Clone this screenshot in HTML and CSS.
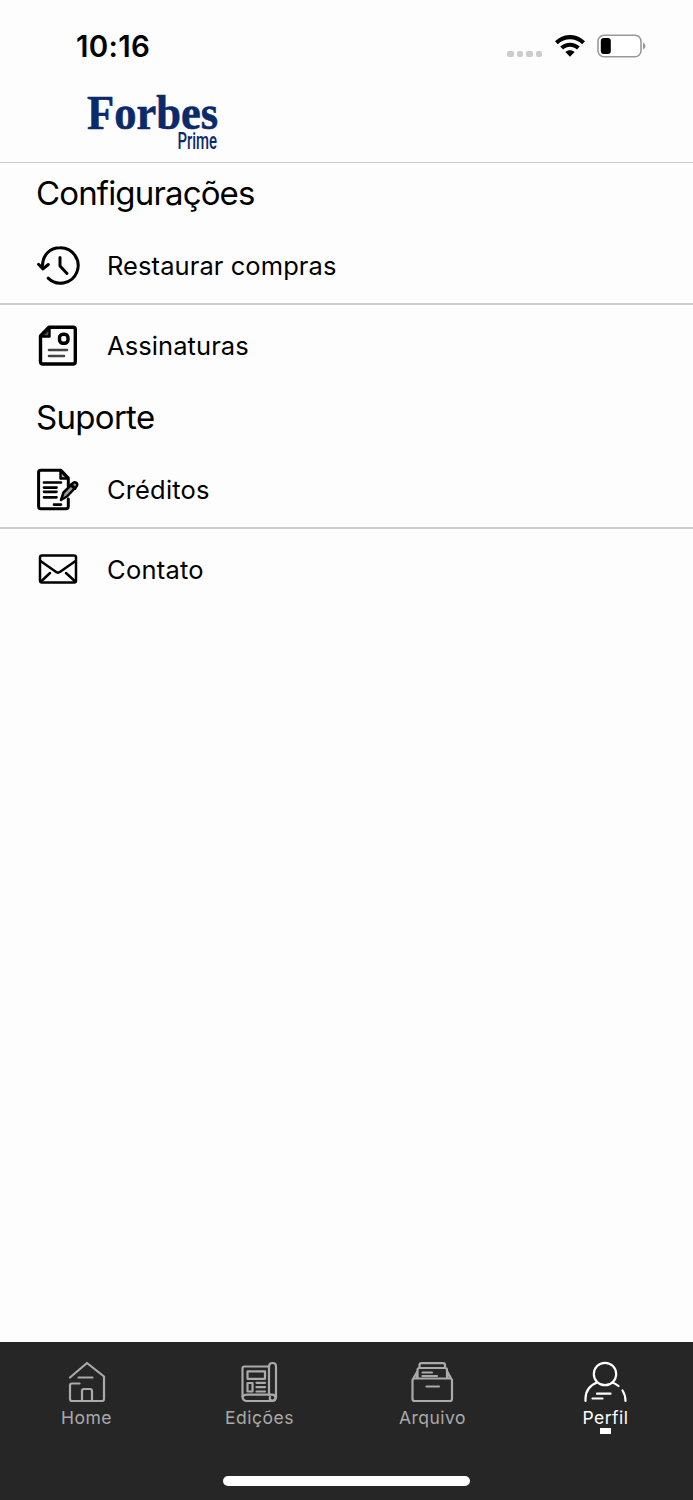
FILE: index.html
```
<!DOCTYPE html>
<html lang="pt-BR">
<head>
    <meta charset="UTF-8">
    <title>Forbes Prime</title>
    <link rel="stylesheet" href="styles.css">
</head>
<body>
<div class="app">
    <div class="status">
        <span class="time">10:16</span>
        <div class="signals">
            <ul class="dots"><li></li><li></li><li></li><li></li></ul>
            <svg class="wifi" width="30" height="22" viewBox="0 0 30 22">
                <path d="M0 6.2C8.5-2.1 21.5-2.1 30 6.2L27.2 9.2C20.3 2.6 9.7 2.6 2.8 9.2Z"/>
                <path d="M5.200 11.600C10.7 6.3 19.3 6.3 24.8 11.6L21.9 14.5C18 10.9 12 10.9 8.1 14.5Z"/>
                <path d="M10.4 17C13 14.7 17 14.7 19.6 17L15 21.8Z"/>
            </svg>
            <svg class="battery" width="49" height="24" viewBox="0 0 49 24">
                <rect x="1" y="1.2" width="43" height="21.6" rx="6" fill="#fff" stroke="#999" stroke-width="1.6"/>
                <rect x="3.8" y="4" width="10" height="16" rx="3" fill="#000"/>
                <path d="M46 8.5Q48.5 9.5 48.5 12T46 15.5Z" fill="#999"/>
            </svg>
        </div>
    </div>
    <div class="header">
        <svg class="logo" width="150" height="69" viewBox="0 0 150 69">
            <text class="forbes" x="1" y="37" textLength="131" lengthAdjust="spacingAndGlyphs">Forbes</text>
            <text class="prime" x="91.5" y="57" textLength="39.500" lengthAdjust="spacingAndGlyphs">Prime</text>
        </svg>
    </div>
    <div class="content">
        <h2 class="config">Configurações</h2>
        <ul class="list">
            <li>
                <svg class="icon" width="44" height="44" viewBox="0 0 44 44" stroke-width="3">
                    <path d="M6.500 22C6.500 11 14 3.800 24 3.800A17.700 17.700 0 1 1 12.100 34.200"/>
                    <path d="M2.500 20.300L7 24.900L12.300 20.500M24 13.500V22L31 29.500"/>
                </svg>
                <span>Restaurar compras</span>
            </li>
            <li>
                <svg class="icon" width="44" height="44" viewBox="0 0 44 44" stroke-width="3.4">
                    <path d="M13 3.300H37Q39.300 3.300 39.300 5.600V37.800Q39.300 40 37 40H6.700Q4.500 40 4.500 37.800V12Z"/>
                    <path d="M13.500 4V12.500H5Z" fill="#555" stroke-width="2.400"/>
                    <rect x="23.500" y="10.300" width="8.500" height="9" rx="3.500" stroke-width="3.400"/>
                    <path d="M13 26H31M13 32H28" stroke="#444" stroke-width="2.600"/>
                </svg>
                <span>Assinaturas</span>
            </li>
        </ul>
        <h2 class="support">Suporte</h2>
        <ul class="list">
            <li>
                <svg class="icon" width="44" height="44" viewBox="0 0 44 44" stroke-width="3">
                    <path d="M32.300 31V38.500Q32.300 40.700 30 40.700H4.800Q2.600 40.700 2.600 38.500V4.500Q2.600 2.300 4.800 2.300H25L32.300 10V18"/>
                    <path d="M24.500 3V10.500H32Z" fill="#aaa" stroke-width="2.400"/>
                    <path d="M8 14.500H25M8 19.600H20.500M8 23.800H20.500M8 29.300H20.500M18 36.600H25" stroke-width="2.700"/>
                    <path d="M27.500 24.500L37 15Q39 13.500 40.500 15Q42 16.500 40.500 18.500L31 28.500L25 32Z" fill="#999" stroke-width="2.500"/>
                    <path d="M35 17L39 20.500"/>
                </svg>
                <span class="credits">Créditos</span>
            </li>
            <li>
                <svg class="icon" width="44" height="44" viewBox="0 0 44 44" stroke-width="2.500">
                    <rect x="4" y="7.500" width="36" height="27" rx="2"/>
                    <path d="M4.500 13L19.800 23.800Q22 25.500 24.200 23.800L39.500 13M5 33.500L14 25M39.300 33.500L30 25"/>
                </svg>
                <span class="contact">Contato</span>
            </li>
        </ul>
    </div>
    <div class="tabs">
        <a class="tab">
            <svg width="44" height="44" viewBox="0 0 44 44">
                <path d="M6 17.5L23 3L40 16.5V39Q40 41 38 41H8Q6 41 6 39V25.5Q6 23.5 8 23.5H15.5M14.5 17.5H28.500M18 40.500V31Q18 29 20 29H26Q28 29 28 31V40.500"/>
            </svg>
            <span>Home</span>
        </a>
        <a class="tab">
            <svg width="44" height="44" viewBox="0 0 44 44">
                <path d="M32 6.500H7.500Q5.500 6.500 5.500 8.500V36Q5.500 41 10 41H35Q39 41 39 37V6Q39 3 35.500 3T32 6.500V35"/>
                <path d="M5.500 36.500Q7 34.700 10 34.700H35Q38.300 34.700 38.300 37.700T35 40.500Q32 40 33 37"/>
                <rect x="10.500" y="11.300" width="17.500" height="7.500"/>
                <rect x="10.500" y="23" width="5" height="8.500"/>
                <path d="M19.500 22.800H28M19.500 27.200H28M19.500 31.500H28"/>
            </svg>
            <span>Edições</span>
        </a>
        <a class="tab">
            <svg width="44" height="44" viewBox="0 0 44 44">
                <path d="M4.500 18.500H40Q42 18.500 42 20.500V39Q42 41 40 41H4.500Q2.500 41 2.500 39V20.500Q2.500 18.500 4.500 18.500ZM2.800 19.500L7 12V18M41.700 19.500L37.500 12V18"/>
                <path d="M7.500 18V10Q7.500 8 9.500 8H35Q37 8 37 10V18M9.500 8V5Q9.500 3.200 11.500 3.200H33Q35 3.200 35 5V8"/>
                <path d="M12.500 12.500H22M12.500 16H27M16.500 26.500H29"/>
            </svg>
            <span>Arquivo</span>
        </a>
        <a class="tab active">
            <svg width="44" height="44" viewBox="0 0 44 44">
                <circle cx="22" cy="14" r="11.2"/>
                <path d="M2.500 41V39Q2.500 27 14 22.500M29 22.500Q32.500 23.500 35.500 26M39.500 30.500Q42.500 35 42.500 41M14 33.700H27.500M9.500 38.500H19.500"/>
            </svg>
            <span>Perfil</span>
            <i class="mark"></i>
        </a>
    </div>
    <div class="home-bar"><i></i></div>
</div>
</body>
</html>
```
FILE: styles.css
```
* {
    padding: 0;
    margin: 0;
    list-style: none;
    box-sizing: border-box;
}

body {
    background: #fdfdfd;
    color: #000;
    font-family: Inter, "Liberation Sans", sans-serif;
}

.app {
    height: 1500px;
    display: flex;
    flex-direction: column;
}

.status {
    height: 92px;
    padding: 0 47px 0 76px;
    display: flex;
    justify-content: space-between;
    align-items: center;
}

.time {
    font-size: 29.5px;
    font-weight: 600;
    letter-spacing: 0.3px;
}

.signals {
    display: flex;
    align-items: center;
}

.dots {
    display: flex;
    gap: 3px;
    margin: 16px 13px 0 0;
}

.dots li {
    width: 6.5px;
    height: 6px;
    border-radius: 2px;
    background: #ccc;
}

.battery {
    margin-left: 12px;
}

.header {
    height: 71px;
    padding-left: 86px;
    border-bottom: 1px solid #ccc;
}

.logo {
    display: block;
    overflow: visible;
    fill: #0a2a6b;
}

.forbes {
    font: bold 49px "Liberation Serif", serif;
    stroke: #0a2a6b;
    stroke-width: 0.6px;
}

.prime {
    font: 500 23.5px Roboto, sans-serif;
}

.content {
    flex: 1;
}

h2 {
    height: 62px;
    line-height: 61px;
    padding-left: 36px;
    font-size: 33px;
    font-weight: 400;
}

.config {
    letter-spacing: -0.85px;
}

.support {
    letter-spacing: -0.7px;
}

.list li {
    height: 82px;
    padding: 0 0 1px 36px;
    display: flex;
    align-items: center;
    gap: 27px;
    font-size: 25.5px;
    letter-spacing: 0.08px;
}

.list li:first-child {
    height: 80px;
    padding: 3px 0 0 36px;
    border-bottom: 2px solid #ccc;
}

.list .credits {
    letter-spacing: 0.15px;
}

.list .contact {
    letter-spacing: 0.25px;
}

.icon {
    fill: none;
    stroke: #000;
    stroke-linecap: round;
    stroke-linejoin: round;
}

.tabs {
    height: 112px;
    padding: 18px 1px 0 0;
    background: #262626;
    display: grid;
    grid-template-columns: repeat(4, 1fr);
}

.tab {
    display: flex;
    flex-direction: column;
    align-items: center;
    color: #aaa;
    font-size: 17.5px;
    line-height: 28px;
    letter-spacing: 0.5px;
}

.tab svg {
    margin-right: 1px;
    fill: none;
    stroke: currentColor;
    stroke-width: 2.2px;
    stroke-linecap: round;
    stroke-linejoin: round;
}

.active {
    color: #fff;
}

.mark {
    width: 11px;
    height: 6px;
    margin-top: -4px;
    background: #fff;
}

.home-bar {
    height: 46px;
    padding-top: 22px;
    background: #262626;
}

.home-bar i {
    display: block;
    width: 247px;
    height: 10px;
    margin: 0 auto;
    border-radius: 5px;
    background: #fff;
}
```
